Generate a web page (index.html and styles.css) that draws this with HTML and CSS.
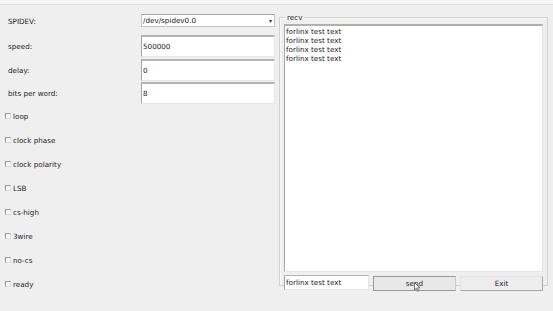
FILE: index.html
```html
<!DOCTYPE html>
<html lang="en">
<head>
    <meta charset="UTF-8">
    <title>spidev test</title>
    <link rel="stylesheet" href="styles.css">
</head>
<body>
    <div class="topbar"></div>
    <div class="window">
        <div class="left">
            <div class="row combo-row">
                <span class="label">SPIDEV:</span>
                <div class="combo">
                    <span>/dev/spidev0.0</span>
                    <span class="arrow">&#9662;</span>
                </div>
            </div>
            <div class="row first">
                <span class="label">speed:</span>
                <div class="field">500000</div>
            </div>
            <div class="row">
                <span class="label">delay:</span>
                <div class="field">0</div>
            </div>
            <div class="row">
                <span class="label">bits per word:</span>
                <div class="field">8</div>
            </div>

            <ul class="checks">
                <li><span class="box"></span>loop</li>
                <li><span class="box"></span>clock phase</li>
                <li><span class="box"></span>clock polarity</li>
                <li><span class="box"></span>LSB</li>
                <li><span class="box"></span>cs-high</li>
                <li><span class="box"></span>3wire</li>
                <li><span class="box"></span>no-cs</li>
                <li><span class="box"></span>ready</li>
            </ul>
        </div>

        <fieldset class="recv">
            <legend>recv</legend>
            <div class="output">
                forlinx test text<br>
                forlinx test text<br>
                forlinx test text<br>
                forlinx test text
            </div>
            <div class="actions">
                <div class="field send-text">forlinx test text</div>
                <button class="btn pressed">send
                    <svg class="cursor" width="7" height="10" viewBox="0 0 7 10"><path d="M0.5 0.5 L0.5 8 L2.3 6.3 L3.6 9.3 L4.8 8.8 L3.5 5.8 L6 5.8 Z" fill="#fff" stroke="#555" stroke-width="0.8"/></svg>
                </button>
                <button class="btn">Exit</button>
            </div>
        </fieldset>
    </div>
</body>
</html>
```

FILE: styles.css
```css
body {
    margin: 0;
    background-color: #efefef;
    font-family: "DejaVu Sans", sans-serif;
    font-size: 7.2px;
    color: #222;
    height: 311px;
    overflow: hidden;
}
.topbar {
    height: 4px;
    background-color: #f6f6f6;
    border-bottom: 1px solid #dedede;
}
.window {
    display: flex;
    padding: 0 0 0 8px;
}
.left {
    width: 270px;
}
.row {
    display: grid;
    grid-template-columns: 133px 134px;
    align-items: center;
    height: 23px;
}
.row.first {
    height: 24px;
}
.combo-row {
    height: 13px;
    margin: 9px 0 7px;
}
.label {
    padding-top: 1px;
}
.combo {
    display: flex;
    justify-content: space-between;
    align-items: center;
    height: 11px;
    background-color: #fff;
    border: 1px solid #c4c4c4;
    border-top-color: #a6a6a6;
    padding: 0 2px 0 1px;
}
.arrow {
    font-size: 6px;
    color: #333;
}
.field {
    background-color: #fff;
    border: 1px solid #e6e6e6;
    border-top: 2px solid #b4b4b4;
    border-left: 1px solid #a6a6a6;
    height: 19px;
    line-height: 19px;
    padding-left: 1px;
}
.checks {
    list-style: none;
    padding: 0;
    margin: 0 0 0 -3px;
}
.checks li {
    display: flex;
    align-items: center;
    height: 24px;
}
.box {
    width: 4px;
    height: 4px;
    border: 1px solid #9a9a9a;
    border-right-color: #ddd;
    border-bottom-color: #ddd;
    background-color: #fbfbfb;
    margin-right: 2px;
}
.recv {
    margin: 8px 0 0 1px;
    width: 254px;
    height: 266px;
    padding: 2px 4px 3px 4px;
    border: 1px solid #d2d2d2;
    box-shadow: inset 1px 1px 0 #fafafa;
}
.recv legend {
    padding: 0 2px;
    margin-left: 1px;
    font-size: 7.2px;
}
.output {
    background-color: #fff;
    border: 1px solid #e4e4e4;
    border-top: 2px solid #b0b0b0;
    border-left: 1px solid #a6a6a6;
    height: 243px;
    padding: 1px 1px;
    line-height: 9px;
}
.actions {
    display: flex;
    gap: 4px;
    margin-top: 3px;
}
.send-text {
    width: 82px;
    height: 13px;
    line-height: 13px;
    border-top-width: 1px;
}
.btn {
    position: relative;
    width: 83px;
    height: 15px;
    margin-top: 1px;
    font-family: "DejaVu Sans", sans-serif;
    font-size: 7.2px;
    color: #222;
    background-color: #ededed;
    border: 1px solid #a8a8a8;
    border-top-color: #e4e4e4;
    border-left-color: #e4e4e4;
    padding: 0;
}
.btn.pressed {
    border: 1px solid #9a9a9a;
    border-right-color: #c8c8c8;
    background-color: #e8e8e8;
}
.cursor {
    position: absolute;
    left: 40px;
    top: 5px;
}
```
